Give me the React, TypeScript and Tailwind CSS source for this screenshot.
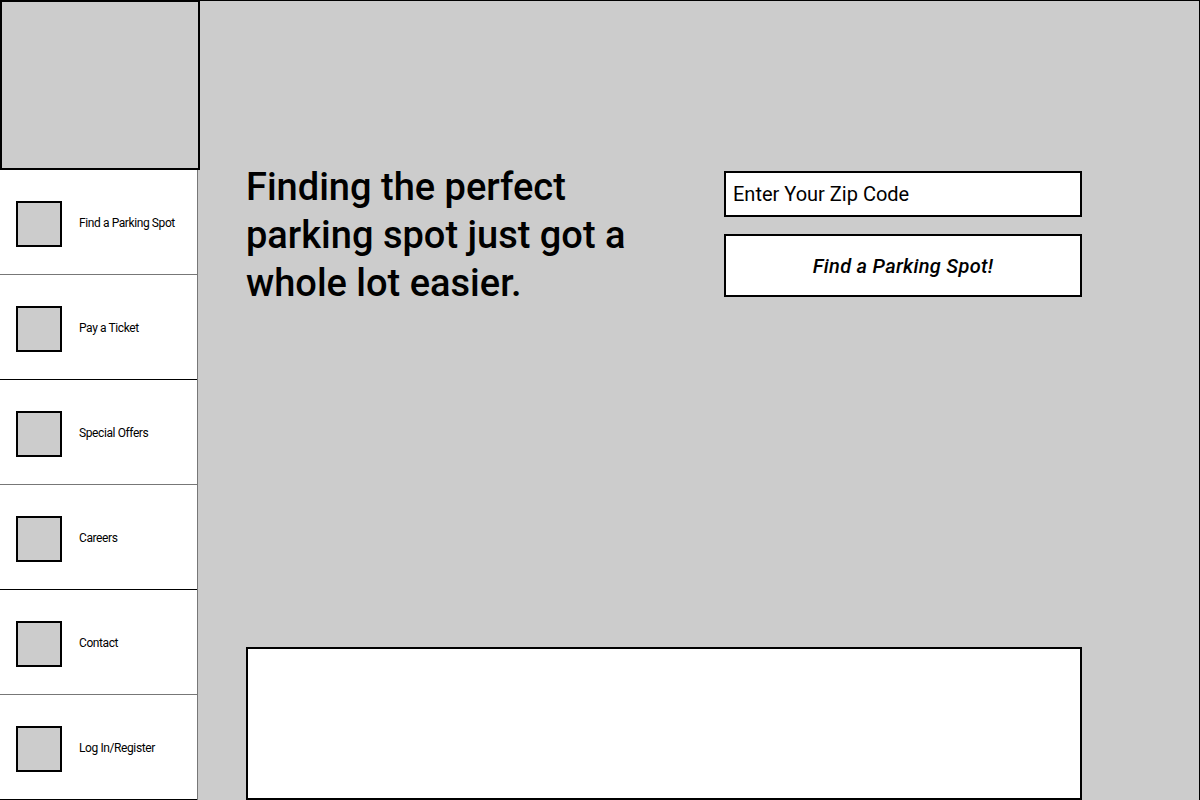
const navItems = [
  { label: 'Find a Parking Spot', line: 'border-[#777]' },
  { label: 'Pay a Ticket', line: 'border-black' },
  { label: 'Special Offers', line: 'border-[#777]' },
  { label: 'Careers', line: 'border-black' },
  { label: 'Contact', line: 'border-[#777]' },
  { label: 'Log In/Register', line: 'border-black' },
];

export default function App() {
  return (
    <div className="flex w-[1200px] h-[800px] overflow-hidden bg-[#cccccc] font-['Roboto',sans-serif] text-black">
      {/* sidebar */}
      <aside className="flex flex-col w-[198px] shrink-0">
        <div className="w-[200px] h-[170px] shrink-0 border-2 border-black bg-[#cccccc] relative z-10" />
        <nav className="flex flex-col flex-1 bg-white border-r border-[#777]">
          {navItems.map((item) => (
            <a
              key={item.label}
              href="#"
              className={`flex flex-1 items-center gap-[17px] pl-4 pt-[3px] border-b ${item.line}`}
            >
              <span className="w-[46px] h-[46px] shrink-0 border-2 border-black bg-[#cccccc]" />
              <span className="text-[12px] tracking-[-0.4px] -mt-[2px]">{item.label}</span>
            </a>
          ))}
        </nav>
      </aside>

      {/* main */}
      <main className="flex flex-col flex-1 border-t border-r border-black pl-12">
        <div className="flex justify-between w-[836px] pt-[162px]">
          <h1 className="text-[38px] leading-[48px] font-medium w-[430px]">
            Finding the perfect parking spot just got a whole lot easier.
          </h1>
          <div className="flex flex-col gap-[17px] w-[358px] pt-[8px]">
            <input
              type="text"
              placeholder="Enter Your Zip Code"
              className="h-[46px] border-2 border-black bg-white px-[7px] text-[20px] placeholder:text-black outline-none"
            />
            <button
              type="button"
              className="h-[63px] border-2 border-black bg-white text-[20px] italic font-medium tracking-[0.3px]"
            >
              Find a Parking Spot!
            </button>
          </div>
        </div>
        <div className="mt-auto w-[836px] h-[153px] border-2 border-black bg-white" />
      </main>
    </div>
  );
}
